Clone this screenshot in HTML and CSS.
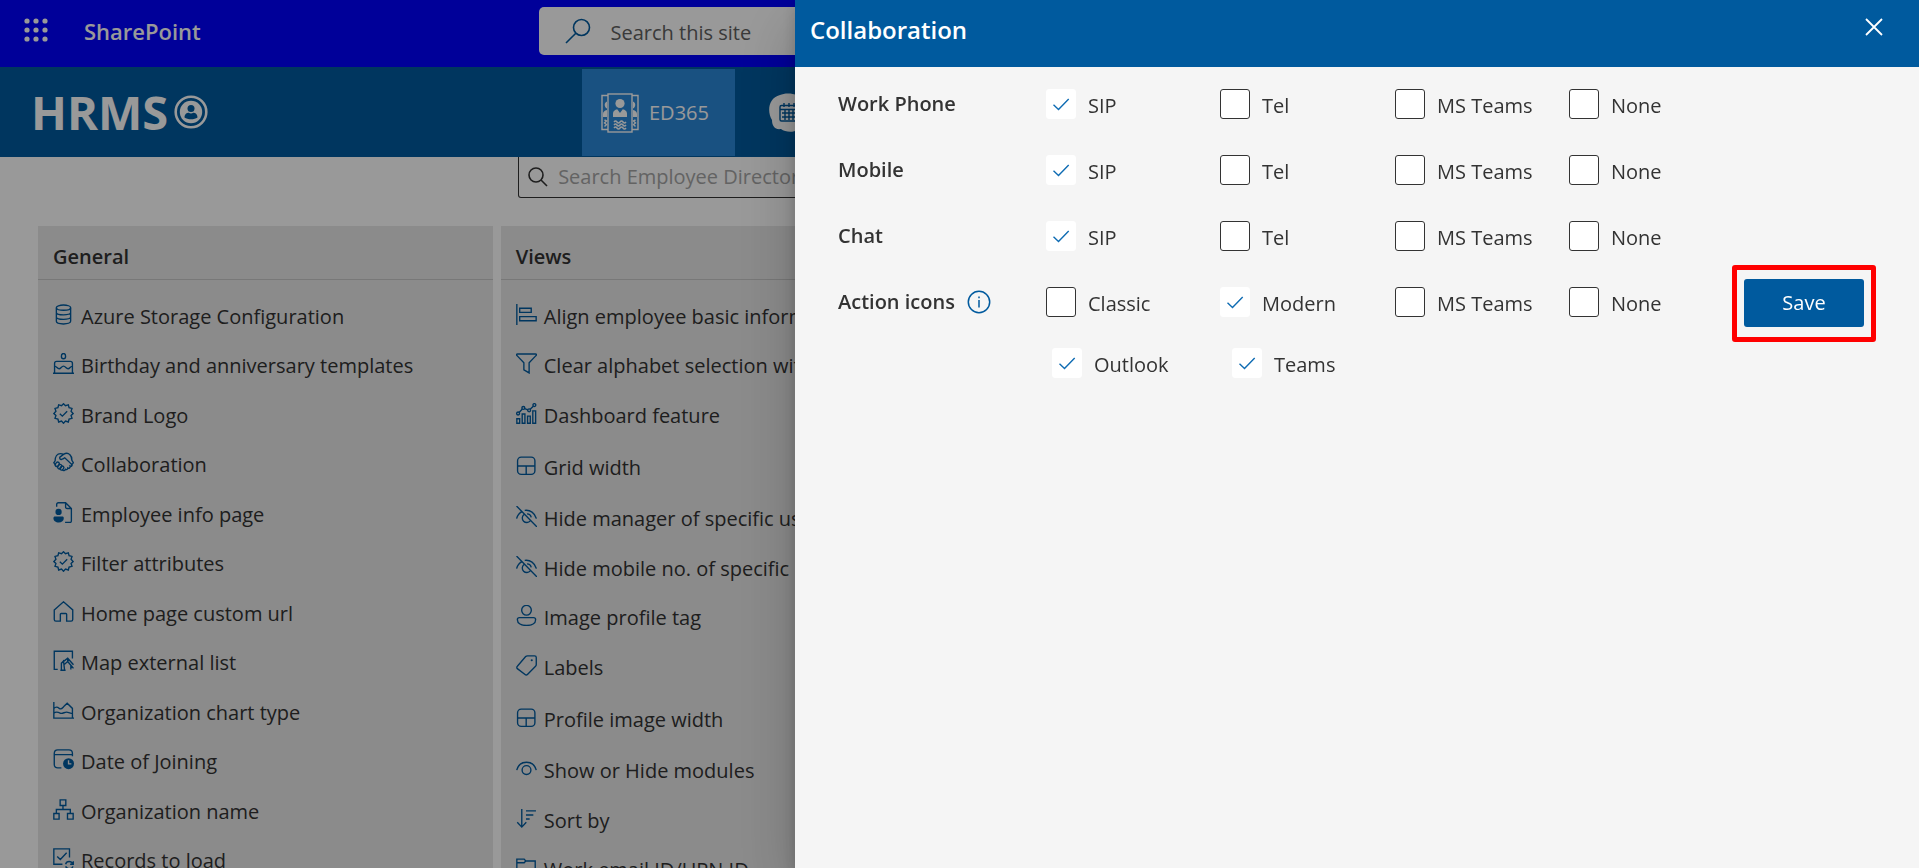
FILE: index.html
```html
<!DOCTYPE html>
<html lang="en">
<head>
<meta charset="utf-8">
<title>HRMS - Collaboration settings</title>
<meta name="viewport" content="width=device-width, initial-scale=1">
<link rel="stylesheet" href="styles.css">
</head>
<body>
<svg class="sprite" aria-hidden="true">
  <symbol id="i-badge" viewBox="0 0 20 20"><path d="M10 .7l1.900 1.900 2.700-.9.700 2.800 2.800.7-.9 2.700L19.200 10l-2 1.900.9 2.700-2.800.7-.7 2.800-2.700-.9L10 19.300l-1.900-2.100-2.700.9-.7-2.800-2.800-.7.9-2.700L.8 10l2-2.100-.9-2.700 2.800-.7.7-2.800 2.700.9z"/><path d="M6.500 10.200l2.400 2.300 4.600-4.700"/></symbol>
  <symbol id="i-grid" viewBox="0 0 20 20"><rect x="1.500" y="2" width="16.500" height="16.500" rx="3.500"/><path d="M1.500 10.500H18M9.700 10.500v8"/></symbol>
  <symbol id="i-hide" viewBox="0 0 20 20"><path d="M.5 0l19.500 20M.6 12C1.500 8.500 3.500 6.300 6 5.100M8.300 4.200c5.200-.8 9.700 2.500 11.100 7.800M7.600 8.100a4.300 4.300 0 1 0 6 6.100M10.500 7.500c2 0 3.600 1.400 4 3.300"/></symbol>
</svg>

<div class="page">
  <header class="suite">
    <button class="waffle" type="button" aria-label="App launcher">
      <svg width="24" height="24" viewBox="0 0 24 24"><g fill="#fff"><circle cx="3" cy="3" r="2.600"/><circle cx="12" cy="3" r="2.600"/><circle cx="21" cy="3" r="2.600"/><circle cx="3" cy="12" r="2.600"/><circle cx="12" cy="12" r="2.600"/><circle cx="21" cy="12" r="2.600"/><circle cx="3" cy="21" r="2.600"/><circle cx="12" cy="21" r="2.600"/><circle cx="21" cy="21" r="2.600"/></g></svg>
    </button>
    <a class="suite-name" href="#">SharePoint</a>
    <label class="suite-search">
      <svg width="26" height="26" viewBox="0 0 26 26" fill="none" stroke="#005a9e" stroke-width="1.600"><circle cx="16.500" cy="9.500" r="8"/><path d="M10.800 15.200L1 25"/></svg>
      <input type="search" placeholder="Search this site" aria-label="Search this site">
    </label>
  </header>

  <nav class="nav">
    <a class="logo" href="#">HRMS
      <svg width="34" height="34" viewBox="0 0 34 34"><circle cx="17" cy="17" r="15.300" fill="none" stroke="#fff" stroke-width="2.600"/><circle cx="17" cy="17" r="11.200" fill="#fff"/><circle cx="17" cy="13.500" r="3.500" fill="#005a9e"/><path d="M10.500 22.500c0-3.600 2.400-4.700 4.200-4.700 1.300 1 3.300 1 4.600 0 1.800 0 4.200 1.100 4.200 4.700-3 2.400-10 2.400-13 0z" fill="#005a9e"/></svg>
    </a>
    <a class="tab tab-active" href="#">
      <svg width="38" height="40" viewBox="0 0 38 40" fill="none" stroke="#fff" stroke-width="1.400"><path d="M7 2.500H1v34h6M31 2.500h6v34h-6"/><rect x="7" y="1" width="24" height="38"/><g fill="#fff" stroke="none"><circle cx="19" cy="10.500" r="4.600"/><path d="M12 24v-3.500c0-2.500 2-3.500 4.200-4.200L19 20l2.800-3.700c2.200.7 4.200 1.700 4.200 4.200V24z"/><path d="M6 8.500c-3.500 1.500-2.500 6 0 7zM6 17c-2.500.5-4 2-4 4v3h4zM32 8.500c3.500 1.500 2.500 6 0 7zM32 17c2.500.5 4 2 4 4v3h-4z"/></g><path d="M13 29q1.500-2 3 0t3 0 3 0 3 0M13 32q1.500-2 3 0t3 0 3 0 3 0M13 35q1.500-2 3 0t3 0 3 0 3 0M3.500 27l2 1-2 2 2 1.500-2 2M34.500 27l-2 1 2 2-2 1.500 2 2"/></svg>
      ED365
    </a>
    <a class="tab" href="#" aria-label="Calendar">
      <svg width="40" height="40" viewBox="0 0 40 40"><path d="M12 2C18-1 32 0 36 8c5 8 3 24-6 29-6 3-13 2-17-1-6 1-9-3-9-9C-1 19 0 5 12 2z" fill="#fff"/><g fill="none" stroke="#005a9e" stroke-width="1.400"><rect x="12" y="12.500" width="18" height="15.500" rx="1.500"/><path d="M12 16.500h18M16 10v4M21 10v4M26 10v4M14 20h14M14 24h14M17 17v10M21 17v10M25 17v10"/></g></svg>
    </a>
  </nav>

  <main class="content">
    <label class="dir-search">
      <svg width="20" height="20" viewBox="0 0 20 20" fill="none" stroke="#333" stroke-width="1.600"><circle cx="8" cy="8" r="7"/><path d="M13 13l6 6"/></svg>
      <input type="search" placeholder="Search Employee Directory" aria-label="Search Employee Directory">
    </label>

    <div class="cards">
      <section class="card">
        <h2>General</h2>
        <ul class="list list-general">
          <li><a href="#"><svg class="ico" viewBox="0 0 20 20"><ellipse cx="10" cy="3.500" rx="6.800" ry="2.500"/><path d="M3.200 3.500v13c0 1.400 3 2.500 6.800 2.500s6.800-1.100 6.800-2.500v-13M3.200 8c0 1.400 3 2.300 6.800 2.300s6.800-.9 6.800-2.300M3.200 12.300c0 1.400 3 2.300 6.800 2.300s6.800-.9 6.800-2.300"/></svg>Azure Storage Configuration</a></li>
          <li><a href="#"><svg class="ico" viewBox="0 0 20 20"><ellipse cx="10" cy="3" rx="2" ry="2.500"/><path d="M0 19.300h20M1.500 19V10c0-1.200.7-2 2-2h13c1.300 0 2 .8 2 2v9M1.500 12.500c2 0 2.500 2.500 4.300 2.500s2.300-2.500 4.200-2.500 2.500 2.500 4.300 2.500 2.300-2.500 4.200-2.500"/></svg>Birthday and anniversary templates</a></li>
          <li><a href="#"><svg class="ico"><use href="#i-badge"/></svg>Brand Logo</a></li>
          <li><a href="#"><svg class="ico" viewBox="0 0 20 20"><path d="M2 8.500L.8 10.300l2 2.700M2 8.500c0-4 2-7 5-7 1.500 0 2.200.3 3 .8C12 1 14.500 1 16 2.500c1.500 1.300 2 3.300 2 5.500l1.400 2.300-2.200 2.700M10 2.300L6.500 5c-.5 2 1.500 2.700 3 1.500l1.700-1L18 12c.5 1-.6 2.200-1.700 1.500.3 1.300-1 2.500-2.200 1.700 0 1.400-1.300 2-2.300 1.300-.8 1.500-2 1.500-3 .5"/><rect x="2.300" y="9.500" width="3" height="4.500" rx="1.500" transform="rotate(38 4 12)"/><rect x="4.800" y="11.500" width="3" height="4.500" rx="1.500" transform="rotate(38 6 14)"/><rect x="7.300" y="13.500" width="3" height="4" rx="1.500" transform="rotate(38 9 15)"/></svg>Collaboration</a></li>
          <li><a href="#"><svg class="ico" viewBox="0 0 20 20"><path d="M3.500 4.500V2.300c0-1 .6-1.600 1.600-1.600H12l5.500 5.500V18c0 1-.5 1.500-1.500 1.500h-4.500M12 .7v4c0 1 .5 1.500 1.500 1.500h4"/><circle class="solid" cx="5.300" cy="9.500" r="3"/><path class="solid" d="M2 13.800h6.800c1 0 1.500.6 1.500 1.500 0 2.700-2 4.300-4.900 4.300S.4 18 .4 15.300c0-.9.600-1.500 1.600-1.500z"/></svg>Employee info page</a></li>
          <li><a href="#"><svg class="ico"><use href="#i-badge"/></svg>Filter attributes</a></li>
          <li><a href="#"><svg class="ico" viewBox="0 0 20 20"><path d="M1.200 8.500L10 .8l8.800 7.700v9c0 1-.6 1.700-1.600 1.700H13v-6.500c0-.5-.3-.8-.8-.8H7.800c-.5 0-.8.300-.8.800v6.500H2.800c-1 0-1.600-.7-1.600-1.700z"/></svg>Home page custom url</a></li>
          <li><a href="#"><svg class="ico" viewBox="0 0 20 20"><path d="M4.500 18.500H1.200V1.200h17.300V8M7 19.300h5M8 19v-6.500l6-4.700 5.500 6.200M8 12.500l2-2 1 8.500M14 8v3l-3 2.500M14 11l3 3.500v4M17 14.500l2.500 3"/></svg>Map external list</a></li>
          <li><a href="#"><svg class="ico" viewBox="0 0 20 20"><path d="M.8 2v15.300H20M.8 8c2-2 3.500-1.500 5.200 0C8 9.500 9 7.500 10.500 6l3-3 5 5v9M.8 12.500c2-1.500 4-1 6 0s4-1 6-1 4 1.300 5.700 1.300"/></svg>Organization chart type</a></li>
          <li><a href="#"><svg class="ico" viewBox="0 0 20 20"><path d="M8 18H4.500c-2 0-3.300-1-3.300-3.300V4.200C1.200 2 2.500.8 4.500.8h10.700c2 0 3.300 1.200 3.300 3.400V7M1.200 5.300h17.300"/><circle class="solid" cx="14.800" cy="14" r="5.200"/><path class="cut" d="M14.800 10.800v3.400h2.700"/></svg>Date of Joining</a></li>
          <li><a href="#"><svg class="ico" viewBox="0 0 20 20"><path d="M6.800.8h5.400v5.400H6.800zM.8 13.800h5v5.400h-5zM13.800 13.800h5.400v5.400h-5.400zM9.500 6.200V10M3.200 13.800V10h13.300v3.800"/></svg>Organization name</a></li>
          <li><a href="#"><svg class="ico" viewBox="0 0 20 20"><path d="M9 15.500H.8V.8h14.900V9M4 8l3 3 6-6.500M12 15.500c1-3.500 5.500-3.500 7 0M19.300 12.500v3h-3M19 17.500c-1 3-5.500 3-7 0"/></svg>Records to load</a></li>
        </ul>
      </section>

      <section class="card">
        <h2>Views</h2>
        <ul class="list list-views">
          <li><a href="#"><svg class="ico" viewBox="0 0 20 20"><path d="M.8 0v20M3.500 4h11v4h-11zM3.500 12h15.700v4H3.500z"/></svg>Align employee basic information</a></li>
          <li><a href="#"><svg class="ico" viewBox="0 0 20 20"><path d="M1.500.9h17c1.200 0 1.200 1 .5 1.600l-6.500 6.800V19L7.500 16V9.300L1 2.500C.3 1.900.3.900 1.500.9z"/></svg>Clear alphabet selection with search</a></li>
          <li><a href="#"><svg class="ico" viewBox="0 0 20 20"><path d="M.8 15h2.700v4.300H.8zM5.900 10.500h2.600v8.800H5.900zM11 12.500h2.600v6.800H11zM16 7.500h2.700v11.800H16z"/><circle cx="2" cy="10" r="1.400"/><circle cx="7" cy="4.700" r="1.400"/><circle cx="12.500" cy="7" r="1.400"/><circle cx="17.500" cy="2" r="1.400"/><path d="M3 9l3-3.300M8.300 5.300l3 1.200M13.500 6l3-3"/></svg>Dashboard feature</a></li>
          <li><a href="#"><svg class="ico"><use href="#i-grid"/></svg>Grid width</a></li>
          <li><a href="#"><svg class="ico"><use href="#i-hide"/></svg>Hide manager of specific users</a></li>
          <li><a href="#"><svg class="ico"><use href="#i-hide"/></svg>Hide mobile no. of specific users</a></li>
          <li><a href="#"><svg class="ico" viewBox="0 0 20 20"><circle cx="10" cy="5" r="4.600"/><path d="M3.300 12h13.400c1.200 0 2 .8 2 2 0 3.500-3.700 5.500-8.700 5.500s-8.700-2-8.700-5.500c0-1.200.8-2 2-2z"/></svg>Image profile tag</a></li>
          <li><a href="#"><svg class="ico" viewBox="0 0 20 20"><path d="M11 .8h6.700c1 0 1.600.6 1.600 1.600V9c0 .7-.2 1.200-.7 1.700l-7.700 7.800c-.7.700-1.600.7-2.300 0L1.300 13c-.7-.7-.7-1.600 0-2.300L9.200 1.500C9.700 1 10.200.8 11 .8z"/><circle class="solid" cx="15" cy="5" r="1"/></svg>Labels</a></li>
          <li><a href="#"><svg class="ico"><use href="#i-grid"/></svg>Profile image width</a></li>
          <li><a href="#"><svg class="ico" viewBox="0 0 20 20"><path d="M.7 11.500C2 6.800 5.700 4 10 4s8 2.800 9.300 7.500"/><circle cx="10" cy="11.500" r="4.200"/></svg>Show or Hide modules</a></li>
          <li><a href="#"><svg class="ico" viewBox="0 0 20 20"><path d="M5.500 1v17M1.200 13.500l4.300 4.700 4.300-4.700M9.500 2.800H19M9.500 6.700h7M9.500 10.500h3.500"/></svg>Sort by</a></li>
          <li><a href="#"><svg class="ico" viewBox="0 0 20 20"><path d="M.8 18V2h7l1.500 1.800h9V18zM.8 5.500h7l1.500-1.700"/></svg>Work email ID/UPN ID</a></li>
        </ul>
      </section>
    </div>
  </main>
</div>

<div class="overlay"></div>

<div class="panel" role="dialog" aria-labelledby="panel-title">
  <div class="panel-head">
    <h1 id="panel-title">Collaboration</h1>
    <button class="close" type="button" aria-label="Close"><svg width="18" height="18" viewBox="0 0 18 18" fill="none" stroke="#fff" stroke-width="1.800"><path d="M1 1l16 16M17 1L1 17"/></svg></button>
  </div>
  <form class="panel-body">
    <div class="fields">
      <div class="row" role="group" aria-label="Work Phone">
        <span class="name">Work Phone</span>
        <label class="opt"><input type="checkbox" checked>SIP</label>
        <label class="opt"><input type="checkbox">Tel</label>
        <label class="opt"><input type="checkbox">MS Teams</label>
        <label class="opt"><input type="checkbox">None</label>
      </div>
      <div class="row" role="group" aria-label="Mobile">
        <span class="name">Mobile</span>
        <label class="opt"><input type="checkbox" checked>SIP</label>
        <label class="opt"><input type="checkbox">Tel</label>
        <label class="opt"><input type="checkbox">MS Teams</label>
        <label class="opt"><input type="checkbox">None</label>
      </div>
      <div class="row" role="group" aria-label="Chat">
        <span class="name">Chat</span>
        <label class="opt"><input type="checkbox" checked>SIP</label>
        <label class="opt"><input type="checkbox">Tel</label>
        <label class="opt"><input type="checkbox">MS Teams</label>
        <label class="opt"><input type="checkbox">None</label>
      </div>
      <div class="row" role="group" aria-label="Action icons">
        <span class="name">Action icons
          <svg width="24" height="24" viewBox="0 0 24 24" fill="none" stroke="#005a9e" stroke-width="1.500"><circle cx="12" cy="12" r="10.700"/><path d="M12 10v7.500M12 6.500v1.700"/></svg>
        </span>
        <label class="opt"><input type="checkbox">Classic</label>
        <label class="opt"><input type="checkbox" checked>Modern</label>
        <label class="opt"><input type="checkbox">MS Teams</label>
        <label class="opt"><input type="checkbox">None</label>
      </div>
      <div class="subrow" role="group" aria-label="Modern action icons">
        <label class="opt"><input type="checkbox" checked>Outlook</label>
        <label class="opt"><input type="checkbox" checked>Teams</label>
      </div>
    </div>
    <div class="actions">
      <div class="highlight"><button class="save" type="button">Save</button></div>
    </div>
  </form>
</div>
</body>
</html>
```

FILE: styles.css
```css
* { box-sizing: border-box; }

body {
  margin: 0;
  height: 100vh;
  overflow: hidden;
  background: #fff;
  color: #333;
  font-family: "Open Sans", "Noto Sans", sans-serif;
  font-size: 20px;
  line-height: 26px;
}

a { color: inherit; text-decoration: none; }
button { border: 0; padding: 0; background: none; font: inherit; cursor: pointer; }
svg { flex: none; display: block; }
.sprite { display: none; }

input[type="search"] {
  flex: 1;
  min-width: 0;
  border: 0;
  padding: 0;
  outline: 0;
  background: none;
  font: inherit;
}

/* Suite bar */
.suite {
  position: relative;
  display: flex;
  height: 67px;
  padding: 18px 24px;
  background: #00f;
  color: #fff;
}
.waffle { width: 24px; height: 24px; }
.suite-name { margin-left: 36px; font-size: 22px; font-weight: 600; }
.suite-search {
  position: absolute;
  top: 7px;
  left: 50%;
  width: 841px;
  height: 48px;
  margin-left: -421px;
  padding-left: 26px;
  display: flex;
  align-items: center;
  gap: 20px;
  border-radius: 5px;
  background: #fff;
}
.suite .suite-search input { padding-top: 3px; }
.suite-search input::placeholder { color: #616161; }

/* Site navigation */
.nav {
  display: flex;
  gap: 14px;
  height: 90px;
  padding: 2px 0 1px 31px;
  background: #005a9e;
  color: #fff;
}
.logo {
  flex: 0 0 537px;
  display: flex;
  align-items: center;
  gap: 6px;
  padding-bottom: 2px;
  font-size: 47px;
  font-weight: 700;
}
.tab {
  display: flex;
  align-items: center;
  gap: 10px;
  padding: 0 26px 0 19px;
}
.tab-active { background: #2b88d8; }

/* Settings lists */
.dir-search {
  display: flex;
  align-items: center;
  gap: 10px;
  width: 46%;
  height: 41px;
  margin: 0 auto;
  padding: 0 9px;
  border: 1px solid #333;
  border-top: 0;
  border-radius: 0 0 3px 3px;
}
.dir-search input::placeholder { color: #a6a6a6; }
.cards {
  display: grid;
  grid-template-columns: repeat(4, 1fr);
  gap: 8px;
  padding: 28px 38px;
}
.card { background: #e8e8e8; }
.card h2 {
  margin: 0;
  padding: 18px 15px 9px;
  border-bottom: 1px solid #c8c8c8;
  font-size: 20px;
  font-weight: 600;
  line-height: 26px;
}
.list {
  display: grid;
  margin: 0;
  padding: 24px 15px;
  list-style: none;
  white-space: nowrap;
}
.list-general { grid-auto-rows: 49px 50px; }
.list-views { grid-auto-rows: 49px 50px 52px 51px 50px; }
.list a { display: flex; gap: 7px; }
.ico {
  width: 21px;
  height: 21px;
  fill: none;
  stroke: #005a9e;
  stroke-width: 1.3;
}
.solid { fill: #005a9e; stroke: none; }
.cut { stroke: #e8e8e8; }

.overlay {
  position: fixed;
  inset: 0;
  background: rgba(0, 0, 0, .4);
}

/* Side panel */
.panel {
  position: fixed;
  top: 0;
  right: 0;
  bottom: 0;
  width: min(1124px, 100%);
  background: #f5f5f5;
  box-shadow: 0 26px 58px rgba(0, 0, 0, .22), 0 5px 14px rgba(0, 0, 0, .18);
}
.panel-head {
  display: flex;
  justify-content: space-between;
  align-items: flex-start;
  height: 67px;
  padding: 11px 29px 0 15px;
  background: #005a9e;
  color: #fff;
}
.panel-head h1 { margin: 0; padding-top: 5px; font-size: 24px; font-weight: 600; line-height: 28px; }
.close {
  display: grid;
  place-items: center;
  width: 32px;
  height: 32px;
}
.panel-body {
  display: flex;
  justify-content: space-between;
  padding: 22px 43px;
}
.fields { display: grid; gap: 36px; }
.row {
  display: grid;
  grid-template-columns: 208px 174px 175px 174px 150px;
  align-items: center;
}
.name { display: flex; align-items: center; gap: 12px; font-weight: 600; }
.subrow {
  display: grid;
  grid-template-columns: repeat(2, 180px);
  margin: -5px 0 0 214px;
}
.opt { display: flex; align-items: flex-end; gap: 12px; }
.opt input {
  appearance: none;
  width: 30px;
  height: 30px;
  margin: 0;
  border: 1px solid #333;
  border-radius: 3px;
  background: #fff;
}
.opt input:checked {
  border-color: #fff;
  background: #fff url("data:image/svg+xml,%3Csvg xmlns='http://www.w3.org/2000/svg' viewBox='0 0 28 28' fill='none' stroke='%230f6cb3' stroke-width='1.400'%3E%3Cpath d='M6.500 14.800l5 4.600L21.700 8.900'/%3E%3C/svg%3E") center / 28px 28px no-repeat;
}
.actions { padding-top: 176px; }
.highlight {
  padding: 9px 7px 10px;
  border: 5px solid #f00;
  border-radius: 3px;
}
.save {
  display: block;
  width: 120px;
  height: 48px;
  border-radius: 3px;
  background: #005a9e;
  color: #fff;
}
```
